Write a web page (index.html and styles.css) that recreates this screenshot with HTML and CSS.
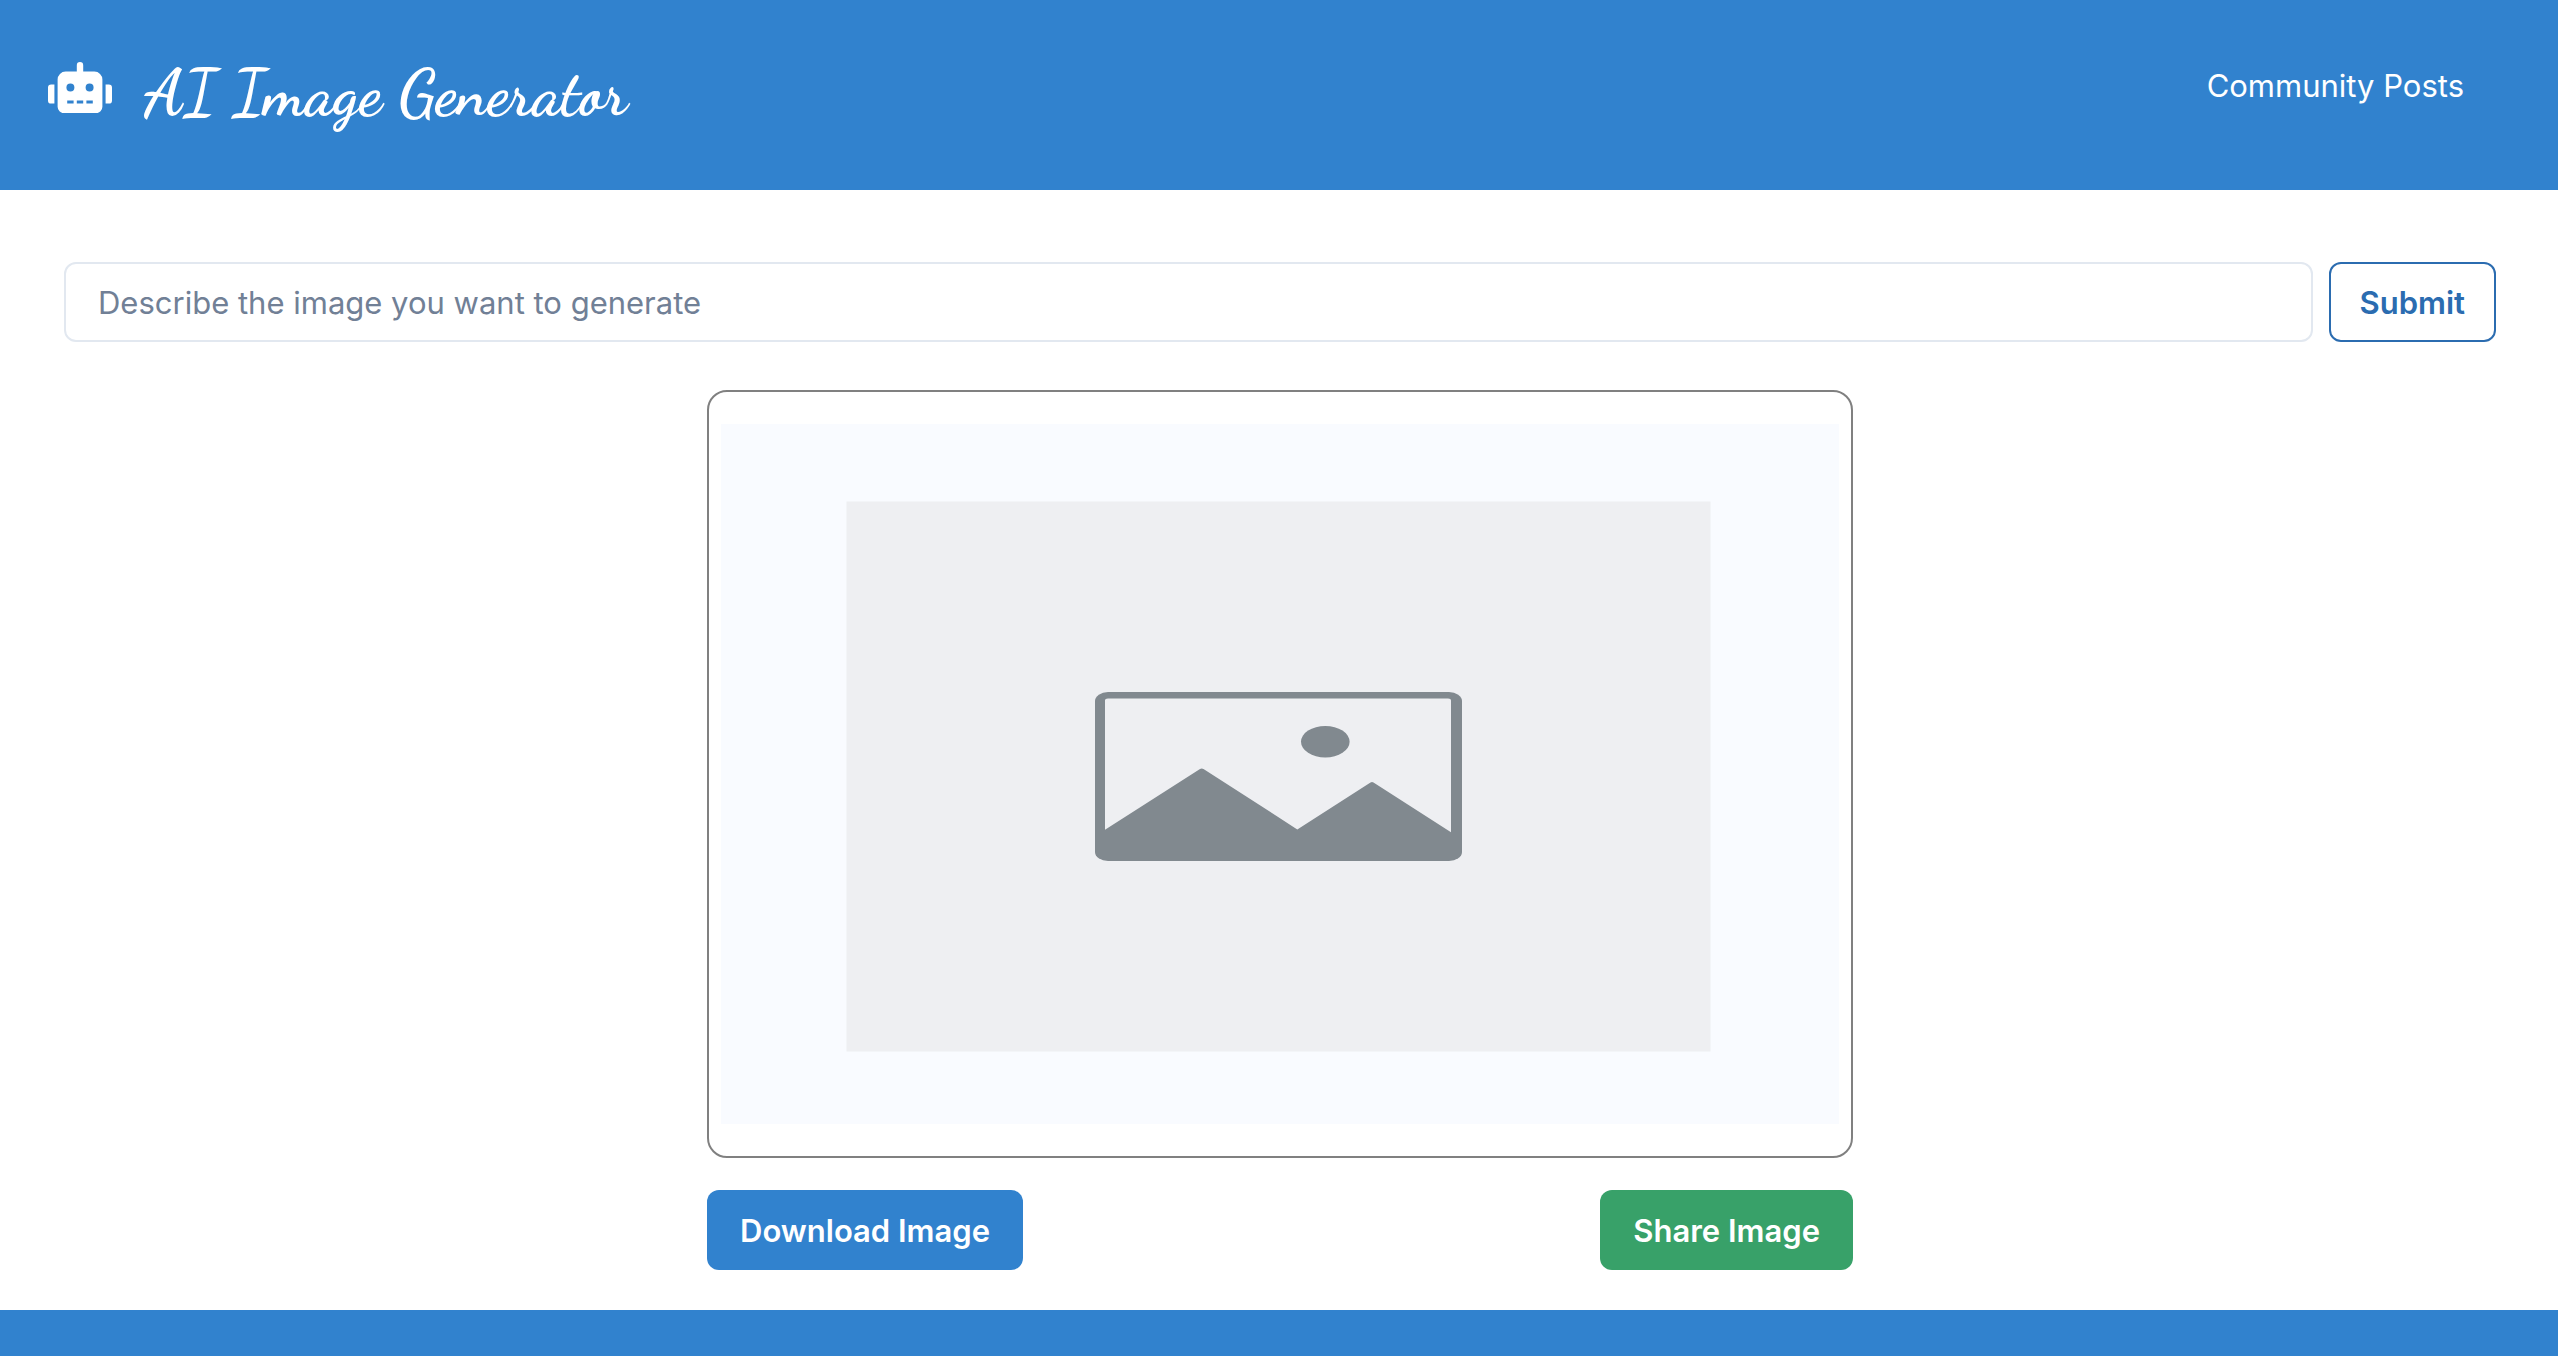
FILE: index.html
```html
<!DOCTYPE html>
<html lang="en">
<head>
<meta charset="utf-8">
<meta name="viewport" content="width=device-width, initial-scale=1">
<title>AI Image Generator</title>
<link rel="stylesheet" href="styles.css">
</head>
<body>
<header class="header">
  <a class="brand" href="#">
    <svg class="brand-icon" viewBox="0 0 640 512" fill="currentColor" aria-hidden="true"><path d="M32,224H64V416H32A31.96166,31.96166,0,0,1,0,384V256A31.96166,31.96166,0,0,1,32,224Zm512-48V448a64.06328,64.06328,0,0,1-64,64H160a64.06328,64.06328,0,0,1-64-64V176a79.974,79.974,0,0,1,80-80H288V32a32,32,0,0,1,64,0V96H464A79.974,79.974,0,0,1,544,176ZM264,256a40,40,0,1,0-40,40A39.997,39.997,0,0,0,264,256Zm-8,128H192v32h64Zm96,0H288v32h64ZM456,256a40,40,0,1,0-40,40A39.997,39.997,0,0,0,456,256Zm-8,128H384v32h64ZM640,256V384a31.96166,31.96166,0,0,1-32,32H576V224h32A31.96166,31.96166,0,0,1,640,256Z"/></svg>
    <span class="brand-name">AI Image Generator</span>
  </a>
  <nav><a class="nav-link" href="#">Community Posts</a></nav>
</header>
<main class="main">
  <form class="prompt">
    <input class="prompt-input" type="text" aria-label="Image description" placeholder="Describe the image you want to generate">
    <button class="button button-outline" type="submit">Submit</button>
  </form>
  <section class="result">
    <div class="frame">
      <svg class="placeholder" viewBox="0 0 1118 700" role="img" aria-label="Image placeholder">
        <rect width="1118" height="700" fill="#f9fbff"/>
        <rect x="125.5" y="77.5" width="864" height="550" fill="#eeeff2"/>
        <rect x="374" y="268" width="367" height="169" rx="13" ry="9" fill="#81898f"/>
        <path d="M384 405.7V276.500Q384 274.500 387 274.500H727Q730 274.500 730 276.500V408.300L652.500 358.500Q651 357.500 649.500 358.500L576.300 405.400L482.500 345Q480.700 343.800 479 345Z" fill="#eeeff2"/>
        <ellipse cx="604.300" cy="317.700" rx="24.300" ry="15.700" fill="#81898f"/>
      </svg>
    </div>
    <div class="actions">
      <button class="button button-blue" type="button">Download Image</button>
      <button class="button button-green" type="button">Share Image</button>
    </div>
  </section>
</main>
<footer class="footer"></footer>
</body>
</html>
```
FILE: styles.css
```css
* {
  box-sizing: border-box;
}

body {
  display: flex;
  flex-direction: column;
  min-height: 100vh;
  margin: 0;
  background: #fff;
  font-family: Inter, "Liberation Sans", sans-serif;
  font-size: 31px;
  line-height: 48px;
}

.header {
  display: flex;
  justify-content: space-between;
  align-items: flex-start;
  padding: 46px 94px 48px 48px;
  background: #3182ce;
  color: #fff;
}

.brand {
  display: flex;
  align-items: flex-start;
  gap: 32px;
  color: inherit;
  text-decoration: none;
}

.brand-icon {
  width: 64px;
  margin-top: 16px;
}

.brand-name {
  font-family: "Dancing Script", cursive;
  font-size: 64px;
  font-weight: 700;
  line-height: 96px;
}

.nav-link {
  display: block;
  margin-top: 16px;
  color: inherit;
  text-decoration: none;
}

.main {
  padding: 72px 62px 40px 64px;
}

.prompt {
  display: flex;
  gap: 16px;
}

.prompt-input {
  flex: 1;
  min-width: 0;
  height: 80px;
  padding: 0 32px;
  border: 2px solid #e2e8f0;
  border-radius: 12px;
  background: #fff;
  color: #1a202c;
  font: inherit;
}

.prompt-input::placeholder {
  color: #718096;
  opacity: 1;
}

.button {
  height: 80px;
  padding: 2px 33px 0;
  border: 0;
  border-radius: 12px;
  color: #fff;
  font: inherit;
  font-weight: 600;
  cursor: pointer;
}

.button-outline {
  padding: 2px 29px 0;
  border: 2px solid #2b6cb0;
  background: #fff;
  color: #2b6cb0;
}

.button-blue {
  background: #3182ce;
}

.button-green {
  background: #38a169;
}

.result {
  max-width: 1146px;
  margin: 48px auto 0;
}

.frame {
  padding: 32px 12px;
  border: 2px solid #808080;
  border-radius: 20px;
}

.placeholder {
  display: block;
  width: 100%;
}

.actions {
  display: flex;
  justify-content: space-between;
  margin-top: 32px;
}

.footer {
  flex: 1;
  min-height: 46px;
  background: #3182ce;
}
```
